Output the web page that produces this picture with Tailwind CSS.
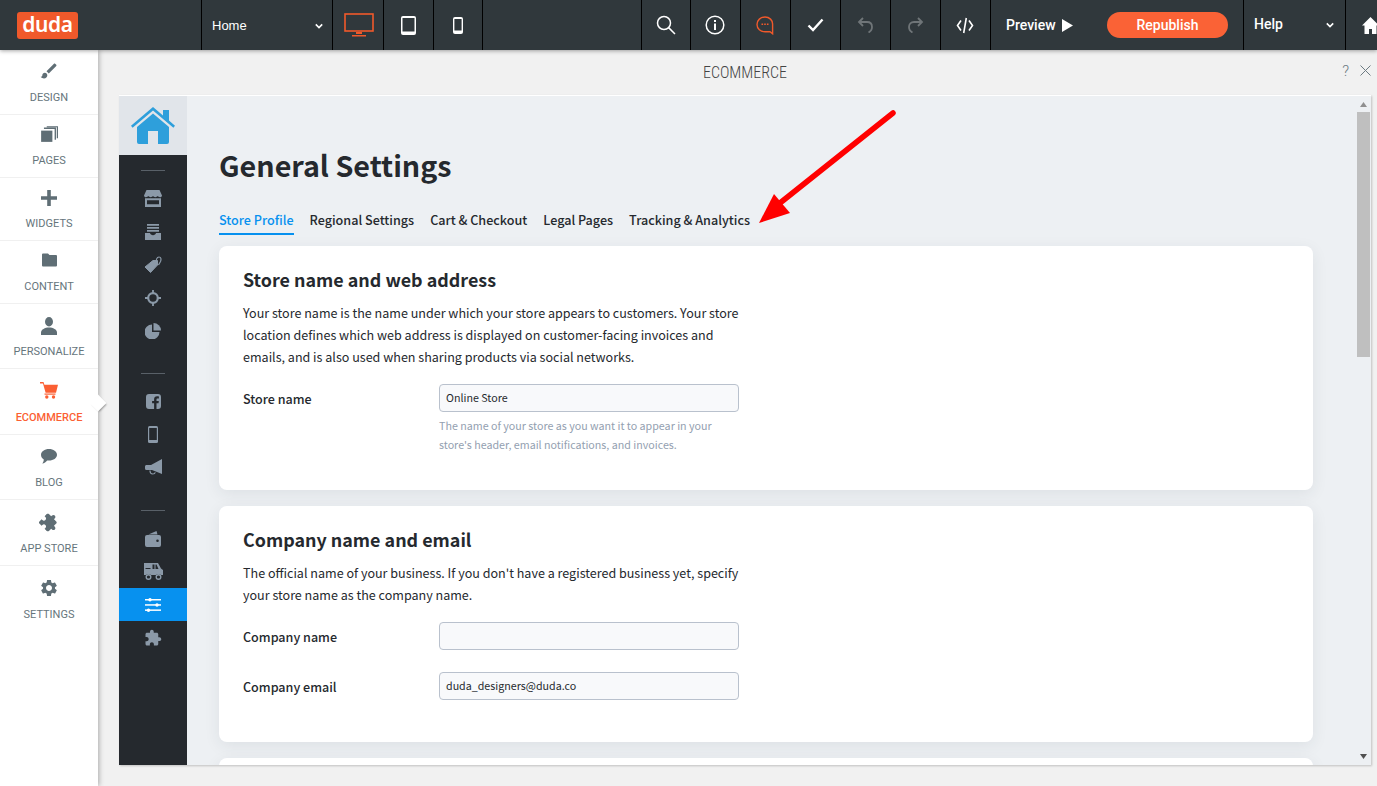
<!DOCTYPE html>
<html>
<head>
<meta charset="utf-8">
<script src="https://cdn.jsdelivr.net/npm/@tailwindcss/browser@4"></script>
</head>
<body class="overflow-hidden">
<div class="relative flex h-[786px] w-[1377px] flex-col overflow-hidden bg-[#f1f1f1] font-['Roboto',sans-serif]">

  <!-- top bar -->
  <header class="relative z-30 flex h-[50px] shrink-0 bg-[#30383c] text-white shadow-[0_1px_4px_rgba(0,0,0,0.35)]">
    <div class="flex w-[201px] items-center pl-[17px]">
      <div class="flex h-[27px] w-[61px] items-center justify-center rounded-[3px] bg-[#f0592b] pb-[2px] font-['Noto_Sans',sans-serif] text-[21px] leading-none font-semibold tracking-[-0.4px]">duda</div>
    </div>
    <div class="flex w-[131px] items-center justify-between border-l border-black pt-[1px] pr-[9px] pl-[10px] font-['Liberation_Sans',sans-serif] text-[13px]">
      <span>Home</span>
      <svg class="h-[8px] w-[8px]" viewBox="0 0 10 8"><path d="M1 2l4 4 4-4" fill="none" stroke="#fff" stroke-width="2"/></svg>
    </div>
    <div class="flex w-[51px] items-center justify-center border-l border-black pl-[1px]">
      <svg class="h-[24px] w-[30px]" viewBox="0 0 30 24" fill="none"><rect x="1" y="1" width="28" height="17" stroke="#f0592b" stroke-width="1.6"/><path d="M12 19h6v2h-6zM8 22h14v1.4H8z" fill="#f0592b"/></svg>
    </div>
    <div class="flex w-[50px] items-center justify-center border-l border-black">
      <svg class="h-[19px] w-[15px]" viewBox="0 0 15 19"><rect x="0" y="0" width="15" height="19" rx="2" fill="#fff"/><rect x="1.5" y="2" width="12" height="13.5" fill="#30383c"/></svg>
    </div>
    <div class="flex w-[49px] items-center justify-center border-l border-black">
      <svg class="h-[17px] w-[10px]" viewBox="0 0 10 17"><rect width="10" height="17" rx="2" fill="#fff"/><rect x="1.4" y="2" width="7.2" height="11.5" fill="#30383c"/></svg>
    </div>
    <div class="w-[159px] border-l border-black"></div>
    <div class="flex w-[49px] items-center justify-center border-l border-black">
      <svg class="h-[20px] w-[20px]" viewBox="0 0 20 20" fill="none" stroke="#fff" stroke-width="1.5"><circle cx="8" cy="8" r="6.5"/><path d="M12.6 12.6L19 19"/></svg>
    </div>
    <div class="flex w-[50px] items-center justify-center border-l border-black pr-[1px]">
      <svg class="h-[20px] w-[20px]" viewBox="0 0 20 20"><circle cx="10" cy="10" r="8.8" fill="none" stroke="#fff" stroke-width="1.5"/><rect x="9" y="8.5" width="2" height="6.5" fill="#fff"/><rect x="9" y="5" width="2" height="2" fill="#fff"/></svg>
    </div>
    <div class="flex w-[50px] items-center justify-center border-l border-black pr-[1px]">
      <svg class="h-[19px] w-[18px]" viewBox="0 0 18 19" fill="none"><path d="M9 1C4.6 1 1 4.2 1 8.4s3.6 7.4 8 7.4h5l2.6 2V8.4C16.8 4.2 13.4 1 9 1z" stroke="#f0592b" stroke-width="1.4"/><path d="M5.5 7.5h1.6v1.6H5.5zM8.200 7.500h1.600v1.600H8.200zM10.900 7.500h1.600v1.600h-1.600z" fill="#f0592b"/></svg>
    </div>
    <div class="flex w-[50px] items-center justify-center border-l border-black pr-[1px]">
      <svg class="h-[14px] w-[17px]" viewBox="0 0 17 14" fill="none"><path d="M1.5 7.5L6 12 15.5 1.5" stroke="#fff" stroke-width="2.4"/></svg>
    </div>
    <div class="flex w-[50px] items-center justify-center border-l border-black pr-[1px]">
      <svg class="h-[16px] w-[17px]" viewBox="0 0 17 16" fill="none"><path d="M6 1L2 5l4 4" fill="none" stroke="#6f7578" stroke-width="1.8"/><path d="M2.5 5H10c3 0 5 2 5 5s-1.500 4.500-3.500 5.500" stroke="#6f7578" stroke-width="1.8"/></svg>
    </div>
    <div class="flex w-[50px] items-center justify-center border-l border-black pr-[1px]">
      <svg class="h-[16px] w-[17px]" viewBox="0 0 17 16" fill="none"><path d="M11 1l4 4-4 4" stroke="#6f7578" stroke-width="1.8"/><path d="M14.500 5H7c-3 0-5 2-5 5s1.500 4.500 3.500 5.500" stroke="#6f7578" stroke-width="1.8"/></svg>
    </div>
    <div class="flex w-[50px] items-center justify-center border-l border-black pr-[1px]">
      <svg class="h-[17px] w-[18px]" viewBox="0 0 18 17" fill="none" stroke="#fff" stroke-width="1.6"><path d="M5 3.500L1.500 8.500 5 13.500M13 3.500l3.500 5-3.500 5M10.300 1L7.700 16"/></svg>
    </div>
    <div class="flex w-[101px] items-center gap-[6px] border-l border-black pl-[15px] text-[14px] font-medium">
      <span>Preview</span>
      <svg class="h-[13px] w-[11px]" viewBox="0 0 11 13"><path d="M0 0l11 6.500L0 13z" fill="#fff"/></svg>
    </div>
    <div class="flex w-[152px] items-center justify-center border-l border-transparent">
      <div class="flex h-[26px] w-[121px] items-center justify-center rounded-[13px] bg-[#fa6236] text-[14px] font-medium">Republish</div>
    </div>
    <div class="flex w-[102px] items-center justify-between border-l border-black pr-[11px] pl-[10px] text-[14px] font-medium">
      <span class="pb-[2px]">Help</span>
      <svg class="h-[8px] w-[8px]" viewBox="0 0 10 8"><path d="M1 2l4 4 4-4" fill="none" stroke="#fff" stroke-width="2"/></svg>
    </div>
    <div class="flex w-[32px] items-center border-l border-black pl-[16px]">
      <svg class="h-[17px] w-[17px] shrink-0" viewBox="0 0 17 17"><path d="M8.500 0L0 8.500h2.500V17h4.500v-5h3v5h4.500V8.500H17z" fill="#fff"/></svg>
    </div>
  </header>

  <div class="flex min-h-0 flex-1">
    <!-- left tool rail -->
    <nav class="relative z-20 w-[98px] shrink-0 bg-white text-center text-[11px] leading-[13px] text-[#66757c] shadow-[1px_0_5px_rgba(0,0,0,0.3)]">
      <div class="flex h-[65px] flex-col items-center border-b border-[#f0f0f0] pt-[11px]">
        <svg class="h-[20px] w-[20px]" viewBox="0 0 24 24" fill="#5f6e75"><path d="M7 14c-1.660 0-3 1.340-3 3 0 1.310-1.160 2-2 2 .92 1.220 2.490 2 4 2 2.210 0 4-1.790 4-4 0-1.660-1.340-3-3-3zm13.710-9.370l-1.340-1.340c-.39-.39-1.020-.39-1.410 0L9 12.250 11.750 15l8.960-8.960c.39-.39.39-1.030 0-1.410z"/></svg>
        <span class="mt-[10px]">DESIGN</span>
      </div>
      <div class="flex h-[63px] flex-col items-center border-b border-[#f0f0f0] pt-[10px]">
        <svg class="h-[18px] w-[18px]" viewBox="0 0 16 16" fill="#5f6e75"><rect x="1" y="5" width="10" height="10"/><path d="M3.500 3.500H13V13h1.200V2.300H3.500zM6 1v1h8.900v9.800H16V1z"/></svg>
        <span class="mt-[11px]">PAGES</span>
      </div>
      <div class="flex h-[63px] flex-col items-center border-b border-[#f0f0f0] pt-[12px]">
        <svg class="h-[16px] w-[16px]" viewBox="0 0 16 16" fill="#5f6e75"><path d="M6.200 0h3.600v6.200H16v3.600H9.800V16H6.200V9.800H0V6.200h6.200z"/></svg>
        <span class="mt-[11px]">WIDGETS</span>
      </div>
      <div class="flex h-[63px] flex-col items-center border-b border-[#f0f0f0] pt-[12px]">
        <svg class="h-[14px] w-[15px]" viewBox="0 0 15 13" fill="#5f6e75"><path d="M1 0h5l1.500 1.500H14a1 1 0 0 1 1 1V12a1 1 0 0 1-1 1H1a1 1 0 0 1-1-1V1a1 1 0 0 1 1-1z"/></svg>
        <span class="mt-[13px]">CONTENT</span>
      </div>
      <div class="flex h-[65px] flex-col items-center border-b border-[#f0f0f0] pt-[13px]">
        <svg class="h-[18px] w-[16px]" viewBox="0 0 16 18" fill="#5f6e75"><ellipse cx="8" cy="4.700" rx="4" ry="4.700"/><path d="M0 18v-2.500C0 12.500 4 10.500 8 10.500s8 2 8 5V18z"/></svg>
        <span class="mt-[10px]">PERSONALIZE</span>
      </div>
      <div class="relative flex h-[66px] flex-col items-center border-b border-[#f0f0f0] pt-[13px] text-[#fb5f33]">
        <svg class="h-[17px] w-[18px]" viewBox="0 0 18 17" fill="#fb5f33"><path d="M0 0h3.500l.9 2.800H18l-2 8H5.600L3 1.400H0z"/><rect x="4.500" y="11.500" width="11" height="1.200"/><circle cx="6.800" cy="15" r="1.700"/><circle cx="13.500" cy="15" r="1.700"/></svg>
        <span class="mt-[12px] font-medium">ECOMMERCE</span>
        <div class="absolute top-[28px] -right-[6px] h-[12px] w-[12px] rotate-45 bg-white shadow-[2px_0_2px_-1px_rgba(0,0,0,0.4)]"></div>
      </div>
      <div class="flex h-[65px] flex-col items-center border-b border-[#f0f0f0] pt-[14px]">
        <svg class="h-[15px] w-[16px]" viewBox="0 0 16 15" fill="#5f6e75"><path d="M8 0c4.400 0 8 2.500 8 5.800s-3.600 5.800-8 5.800c-.6 0-1.200 0-1.800-.1C5 13 3.300 14.500 1.200 14.500c1-1 1.500-2.200 1.600-4C1 9.500 0 7.800 0 5.800 0 2.500 3.600 0 8 0z"/></svg>
        <span class="mt-[12px]">BLOG</span>
      </div>
      <div class="flex h-[66px] flex-col items-center border-b border-[#f0f0f0] pt-[13px]">
        <svg class="h-[19px] w-[19px] rotate-45" viewBox="0 0 24 24" fill="#5f6e75"><path d="M20.500 11H19V7c0-1.100-.9-2-2-2h-4V3.500C13 2.120 11.880 1 10.500 1S8 2.120 8 3.500V5H4c-1.100 0-1.990.9-1.990 2v3.800H3.500c1.490 0 2.700 1.210 2.700 2.700s-1.210 2.700-2.700 2.700H2V20c0 1.100.9 2 2 2h3.800v-1.500c0-1.490 1.210-2.700 2.700-2.700 1.490 0 2.700 1.210 2.700 2.700V22H17c1.100 0 2-.9 2-2v-4h1.500c1.380 0 2.500-1.120 2.500-2.500S21.880 11 20.500 11z"/></svg>
        <span class="mt-[10px]">APP STORE</span>
      </div>
      <div class="flex h-[64px] flex-col items-center pt-[12px]">
        <svg class="h-[20px] w-[20px]" viewBox="0 0 24 24" fill="#5f6e75"><path d="M19.140 12.940c.04-.3.060-.61.060-.94 0-.32-.02-.64-.07-.94l2.030-1.580c.18-.14.230-.41.120-.61l-1.920-3.320c-.12-.22-.37-.29-.59-.22l-2.390.96c-.5-.38-1.030-.7-1.620-.94l-.36-2.540c-.04-.24-.24-.41-.48-.41h-3.840c-.24 0-.43.170-.47.410l-.36 2.540c-.59.240-1.130.570-1.620.940l-2.390-.96c-.22-.08-.47 0-.59.220L2.740 8.870c-.12.210-.08.470.120.610l2.030 1.580c-.05.3-.09.630-.09.940s.02.640.070.940l-2.030 1.580c-.18.140-.23.410-.12.610l1.920 3.320c.12.220.37.290.59.220l2.390-.96c.5.380 1.030.7 1.620.94l.36 2.540c.05.240.24.410.48.410h3.840c.24 0 .44-.17.47-.41l.36-2.540c.59-.24 1.130-.56 1.620-.94l2.390.96c.22.080.47 0 .59-.22l1.920-3.320c.12-.22.070-.47-.12-.61l-2.010-1.580zM12 15.600c-1.980 0-3.600-1.620-3.600-3.600s1.620-3.600 3.600-3.600 3.600 1.620 3.600 3.600-1.620 3.600-3.600 3.600z"/></svg>
        <span class="mt-[10px]">SETTINGS</span>
      </div>
    </nav>

    <!-- panel -->
    <main class="relative flex min-w-0 flex-1 flex-col pr-[6px] pb-[21px] pl-[21px]">
      <div class="flex h-[45px] shrink-0 items-center justify-center text-[16px] font-light text-[#444] [font-stretch:condensed]">ECOMMERCE</div>
      <span class="absolute top-[12px] right-[28px] text-[15px] leading-[18px] font-light text-[#6d7b82]">?</span>
      <svg class="absolute top-[15px] right-[6px] h-[11px] w-[11px]" viewBox="0 0 11 11" fill="none" stroke="#6d7b82" stroke-width="1"><path d="M.5.500l10 10M10.500.500l-10 10"/></svg>

      <div class="flex min-h-0 flex-1 overflow-hidden border-t border-white bg-[#edf0f3] font-['Noto_Sans_CJK_SC','Noto_Sans',sans-serif] shadow-[1px_1px_2px_rgba(0,0,0,0.2)]">
        <!-- ecommerce nav -->
        <aside class="w-[68px] shrink-0 bg-[#25292e]">
          <div class="flex h-[59px] items-center justify-center bg-[#e1e5ea]">
            <svg class="h-[37px] w-[44px]" viewBox="0 0 44 37" fill="#2e9fdb"><path d="M22 0L32 8.500V3h6v10.600l6 5.200-1.600 1.900L22 3.500 1.600 20.700 0 18.800z"/><path d="M22 6.500L38 20v15a2 2 0 0 1-2 2H27V24h-10v13H8a2 2 0 0 1-2-2V20z"/></svg>
          </div>
          <div class="mx-auto mt-[15px] mb-[11px] h-px w-[24px] bg-[#596068]"></div>
          <div class="flex h-[33px] items-center justify-center">
            <svg class="h-[17px] w-[18px]" viewBox="0 0 18 17" fill="#8b99a8"><path d="M2.500 0h13L18 5.500c0 1.100-1 1.800-2 1.800s-1.700-.5-2.300-1.200c-.6.700-1.400 1.200-2.400 1.200s-1.700-.5-2.300-1.200c-.6.700-1.300 1.200-2.300 1.200s-1.800-.5-2.400-1.200C3.700 6.800 3 7.300 2 7.300S0 6.600 0 5.500z"/><path d="M1 8.300h16V17H1zM3 10.300v4h12v-4z" fill-rule="evenodd"/></svg>
          </div>
          <div class="flex h-[33px] items-center justify-center">
            <svg class="h-[16px] w-[16px]" viewBox="0 0 16 16" fill="#8b99a8"><path d="M2 0h12v1.700H2zM2 3h12v1.700H2zM2 6h12v1.700H2zM0 9h5c.3 1.400 1.500 2.200 3 2.200S10.700 10.400 11 9h5v7H0z"/></svg>
          </div>
          <div class="flex h-[33px] items-center justify-center">
            <svg class="h-[18px] w-[18px]" viewBox="0 0 18 18"><path d="M1 11L9 4.500h4.500V9L6.500 16.500z" fill="#8b99a8" stroke="#8b99a8" stroke-linejoin="round"/><path d="M12.500 7c-1-3 .5-6 2.500-6s2.500 2 1.500 4.500l-2 3.500" fill="none" stroke="#8b99a8" stroke-width="1.200"/></svg>
          </div>
          <div class="flex h-[33px] items-center justify-center">
            <svg class="h-[16px] w-[16px]" viewBox="0 0 16 16" fill="none" stroke="#8b99a8"><circle cx="8" cy="8" r="4.800" stroke-width="2.200"/><path d="M8 0v3.500M8 12.500V16M0 8h3.500M12.500 8H16" stroke-width="1.800"/></svg>
          </div>
          <div class="flex h-[33px] items-center justify-center">
            <svg class="h-[16px] w-[16px]" viewBox="0 0 16 16" fill="#8b99a8"><path d="M7 1.500V9h7.500A7.500 7.500 0 1 1 7 1.500z"/><path d="M8.500 0A7.500 7.500 0 0 1 16 7.500H8.500z"/></svg>
          </div>
          <div class="mx-auto mt-[26px] mb-[11px] h-px w-[24px] bg-[#596068]"></div>
          <div class="flex h-[33px] items-center justify-center">
            <svg class="h-[15px] w-[15px]" viewBox="0 0 15 15"><path d="M3 0h9a3 3 0 0 1 3 3v9a3 3 0 0 1-3 3h-1.500V9.300h2l.3-2.300h-2.300V5.600c0-.7.200-1.100 1.100-1.100h1.300V2.400c-.3 0-1-.1-1.800-.1-1.900 0-3 1.100-3 3.100V7h-2v2.300h2V15H3a3 3 0 0 1-3-3V3a3 3 0 0 1 3-3z" fill="#8b99a8"/></svg>
          </div>
          <div class="flex h-[33px] items-center justify-center">
            <svg class="h-[17px] w-[10px]" viewBox="0 0 10 17"><rect width="10" height="17" rx="1.500" fill="#8b99a8"/><rect x="1.200" y="2" width="7.600" height="12" fill="#25292e"/></svg>
          </div>
          <div class="flex h-[33px] items-center justify-center">
            <svg class="h-[17px] w-[17px]" viewBox="0 0 17 17"><path d="M17 0v15L7 11H1.500A1.500 1.500 0 0 1 0 9.500v-2C0 6.700.7 6 1.500 6H6z" fill="#8b99a8"/><path d="M5 11.500c0 2 1 3.500 2.800 3.500 1.300 0 2.200-.7 2.500-1.700" fill="none" stroke="#8b99a8" stroke-width="1.200"/></svg>
          </div>
          <div class="mx-auto mt-[26px] mb-[11px] h-px w-[24px] bg-[#596068]"></div>
          <div class="flex h-[33px] items-center justify-center">
            <svg class="h-[16px] w-[16px]" viewBox="0 0 16 16" fill="#8b99a8"><path d="M1 4.500L11.500 0l1 3.500H3.500z" /><path d="M2 4h12a2 2 0 0 1 2 2v8a2 2 0 0 1-2 2H2a2 2 0 0 1-2-2V6a2 2 0 0 1 2-2zm10.500 4.500a1.300 1.300 0 1 0 0 2.600 1.300 1.300 0 0 0 0-2.600z" fill-rule="evenodd"/></svg>
          </div>
          <div class="flex h-[33px] items-center justify-center">
            <svg class="h-[17px] w-[19px]" viewBox="0 0 19 17" fill="#8b99a8"><path d="M0 0h14l3 5.500 2 1.500v5H0zM1.500 5v1h5V5zM8.500 1.500V6h2V1.500zM11.500 1.500V6h3l-2-4.500z" fill-rule="evenodd"/><circle cx="4.500" cy="14" r="3" fill="#25292e"/><circle cx="4.500" cy="14" r="2.300" fill="none" stroke="#8b99a8" stroke-width="1.400"/><circle cx="14.500" cy="14" r="3" fill="#25292e"/><circle cx="14.500" cy="14" r="2.300" fill="none" stroke="#8b99a8" stroke-width="1.400"/></svg>
          </div>
          <div class="flex h-[33px] items-center justify-center bg-[#0791ef]">
            <svg class="h-[14px] w-[16px]" viewBox="0 0 16 14" fill="#fff"><rect y="1" width="16" height="1.500"/><rect y="6.200" width="16" height="1.500"/><rect y="11.400" width="16" height="1.500"/><circle cx="5" cy="1.700" r="1.700"/><circle cx="12" cy="7" r="1.700"/><circle cx="3.500" cy="12.200" r="1.700"/></svg>
          </div>
          <div class="flex h-[33px] items-center justify-center">
            <svg class="h-[18px] w-[18px]" viewBox="0 0 24 24" fill="#8b99a8"><path d="M20.500 11H19V7c0-1.100-.9-2-2-2h-4V3.500C13 2.120 11.880 1 10.500 1S8 2.120 8 3.500V5H4c-1.100 0-1.990.9-1.990 2v3.800H3.500c1.490 0 2.700 1.210 2.700 2.700s-1.210 2.700-2.700 2.700H2V20c0 1.100.9 2 2 2h3.800v-1.500c0-1.490 1.210-2.700 2.700-2.700 1.490 0 2.700 1.210 2.700 2.700V22H17c1.100 0 2-.9 2-2v-4h1.500c1.380 0 2.500-1.120 2.500-2.500S21.880 11 20.500 11z"/></svg>
          </div>
        </aside>

        <!-- page -->
        <section class="relative min-w-0 flex-1 overflow-hidden pt-[47px] pr-[58px] pl-[32px] text-[#25292e]">
          <h1 class="text-[28.7px] leading-[44px] font-bold">General Settings</h1>
          <div class="mt-[23px] flex gap-[16px] text-[12.6px] leading-[20px] font-medium">
            <span class="border-b-2 border-[#0791ef] pb-[3px] text-[#0791ef]">Store Profile</span>
            <span>Regional Settings</span>
            <span>Cart &amp; Checkout</span>
            <span>Legal Pages</span>
            <span>Tracking &amp; Analytics</span>
          </div>

          <div class="mt-[11px] h-[244px] rounded-[8px] bg-white px-[24px] pt-[19px] shadow-[0_4px_16px_rgba(40,50,60,0.08)]">
            <h2 class="text-[17.9px] leading-[28px] font-bold">Store name and web address</h2>
            <p class="mt-[9px] w-[500px] text-[12.55px] leading-[22px]">Your store name is the name under which your store appears to customers. Your store location defines which web address is displayed on customer-facing invoices and emails, and is also used when sharing products via social networks.</p>
            <div class="mt-[16px] flex">
              <label class="w-[196px] pt-[5px] text-[12.55px] leading-[20px] font-medium">Store name</label>
              <div class="w-[300px]">
                <div class="flex h-[28px] items-center rounded-[4px] border border-[#b9c1cd] bg-[#f8f9fb] px-[6px] text-[10.7px]">Online Store</div>
                <p class="mt-[4px] text-[10.7px] leading-[19px] text-[#93a0b0]">The name of your store as you want it to appear in your store's header, email notifications, and invoices.</p>
              </div>
            </div>
          </div>

          <div class="mt-[16px] h-[236px] rounded-[8px] bg-white px-[24px] pt-[19px] shadow-[0_4px_16px_rgba(40,50,60,0.08)]">
            <h2 class="text-[17.9px] leading-[28px] font-bold">Company name and email</h2>
            <p class="mt-[9px] w-[500px] text-[12.55px] leading-[22px]">The official name of your business. If you don't have a registered business yet, specify your store name as the company name.</p>
            <div class="mt-[16px] flex items-center">
              <label class="w-[196px] pt-[2px] text-[12.55px] leading-[20px] font-medium">Company name</label>
              <div class="h-[28px] w-[300px] rounded-[4px] border border-[#b9c1cd] bg-[#f8f9fb]"></div>
            </div>
            <div class="mt-[22px] flex items-center">
              <label class="w-[196px] pt-[2px] text-[12.55px] leading-[20px] font-medium">Company email</label>
              <div class="flex h-[28px] w-[300px] items-center rounded-[4px] border border-[#b9c1cd] bg-[#f8f9fb] px-[6px] text-[10.7px]">duda_designers@duda.co</div>
            </div>
          </div>

          <div class="mt-[16px] h-[60px] rounded-[8px] bg-white shadow-[0_4px_16px_rgba(40,50,60,0.08)]"></div>

          <!-- scrollbar -->
          <div class="absolute top-0 right-0 bottom-0 flex w-[15px] flex-col items-center bg-transparent">
            <svg class="mt-[6px] h-[5px] w-[7px]" viewBox="0 0 7 5"><path d="M3.500 0L7 5H0z" fill="#8f8f8f"/></svg>
            <div class="mt-[5px] h-[245px] w-[13px] bg-[#bfbfbf]"></div>
            <svg class="mt-auto mb-[6px] h-[5px] w-[7px]" viewBox="0 0 7 5"><path d="M0 0h7L3.500 5z" fill="#505050"/></svg>
          </div>
        </section>
      </div>

      <!-- annotation arrow -->
      <svg class="pointer-events-none absolute top-[45px] left-[640px] h-[140px] w-[160px]" viewBox="0 0 160 140"><path d="M155 18L42 108" stroke="#ff0000" stroke-width="5.500" stroke-linecap="round" fill="none"/><path d="M21 128L36 99 52 118z" fill="#ff0000"/></svg>
    </main>
  </div>
</div>
</body>
</html>
